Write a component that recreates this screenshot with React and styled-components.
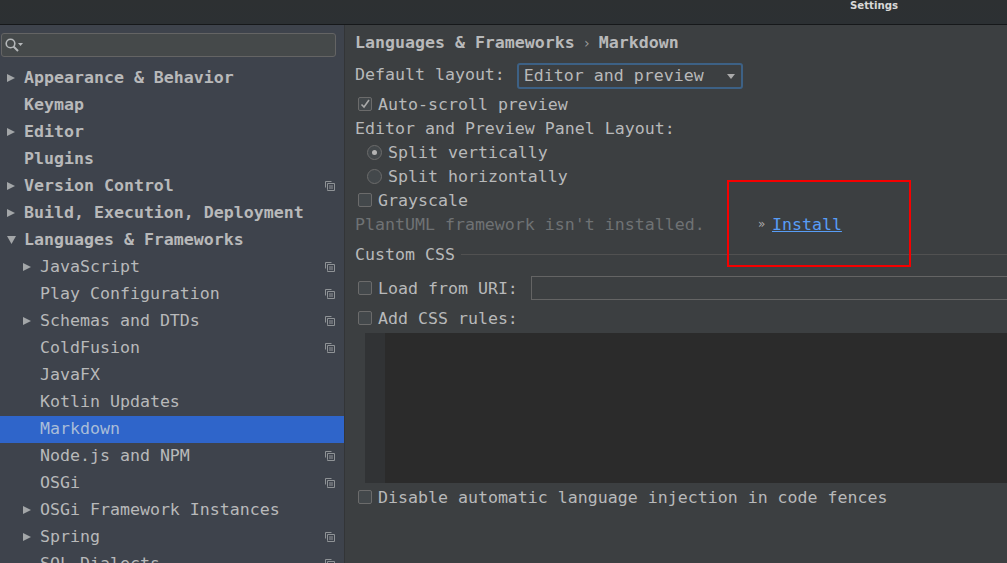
import React from "react";
import styled, { createGlobalStyle } from "styled-components";

const Global = createGlobalStyle`
  html, body { margin: 0; padding: 0; background: #3c3f41; }
  body { font-family: "DejaVu Sans Mono", monospace; font-size: 16.6px; }
`;
const Page = styled.div`
  width: 1007px; height: 563px; position: relative; overflow: hidden;
  display: flex; flex-direction: column; color: #b8b9ba;
`;
const TitleBar = styled.header`
  height: 24px; flex: none; background: linear-gradient(#2d3032, #2c3033);
  border-bottom: 1px solid #16181a; position: relative;
`;
const TitleText = styled.span`
  position: absolute; left: 850px; top: -1px; line-height: 14px;
  font-family: "DejaVu Sans", sans-serif; font-weight: 700; font-size: 10.2px; color: #d8d8d8;
`;
const Body = styled.div`display: flex; flex: 1; min-height: 0;`;
const Sidebar = styled.nav`
  width: 344px; flex: none; background: #3e434c; border-right: 1px solid #333537;
  padding-top: 8px; overflow: hidden;
`;
const SearchBox = styled.div`
  width: 330px; height: 22px; margin-left: 1px; background: #45494a; border: 1px solid #646464;
  border-radius: 3px; display: flex; align-items: center; padding-left: 3px; box-sizing: content-box;
`;
const Tree = styled.ul`list-style: none; margin: 8px 0 0; padding: 0;`;
const Row = styled.li`
  height: 27px; display: flex; align-items: center; position: relative; white-space: pre; box-sizing: border-box;
  padding: 0 9px 2px ${p => (p.$sub ? 40 : 24)}px;
  font-weight: ${p => (p.$sub ? 400 : 700)};
  background: ${p => (p.$sel ? "#2f65ca" : "transparent")};
  color: ${p => (p.$sel ? "#a9bdd8" : "inherit")};
`;
const RowLabel = styled.span`flex: 1;`;
const Arrow = styled.svg`position: absolute; left: ${p => (p.$sub ? 23 : 7)}px; top: 8px;`;

const Main = styled.main`flex: 1; min-width: 0; padding: 5px 0 0 10px; overflow: hidden;`;
const Crumbs = styled.div`height: 25px; display: flex; align-items: center; font-weight: 700; white-space: pre;`;
const CrumbSep = styled.span`font-weight: 400; font-size: 14px; width: 24px; text-align: center; color: #999;`;
const FormRow = styled.div`
  height: ${p => p.$h || 24}px; display: flex; align-items: center; white-space: pre;
  margin-top: ${p => p.$mt || 0}px;
`;
const ComboLabel = styled.span`margin-bottom: 4px;`;
const Combo = styled.div`
  width: 226px; height: 26px; margin-left: 12px; padding: 0 6px 2px 5px; display: flex; align-items: center;
  justify-content: space-between; border: 2px solid #3d6185; border-radius: 3px; background: #3c3f41;
  box-sizing: border-box;
`;
const Caret = styled.span`width: 0; height: 0; margin-top: 2px; border: 4px solid transparent; border-top: 5px solid #aaaaaa; border-bottom: 0;`;
const Check = styled.span`
  width: 12px; height: 12px; border: 1px solid #6b6b6b; border-radius: 2px; background: #43484b;
  margin: 0 6px 0 3px; flex: none; display: flex; align-items: center; justify-content: center;
`;
const Radio = styled.span`
  width: 13px; height: 13px; border: 1px solid #6b6b6b; border-radius: 50%; background: #43484b;
  margin: 0 6px 0 12px; flex: none; display: flex; align-items: center; justify-content: center;
`;
const Dot = styled.span`width: 5px; height: 5px; border-radius: 50%; background: #b4b4b4;`;
const Muted = styled.span`color: #6f7274; width: 403px;`;
const More = styled.span`width: 14px; font-size: 12px; color: #aaa; font-family: "DejaVu Sans", sans-serif;`;
const Link = styled.a`color: #589df6; text-decoration: underline;`;
const SectionTitle = styled.div`display: flex; align-items: center; gap: 6px; height: 24px; margin-top: 6px; white-space: pre;`;
const Rule = styled.span`flex: 1; height: 1px; background: #515151;`;
const UriInput = styled.div`flex: 1; height: 22px; margin-left: 13px; border: 1px solid #646464; border-right: 0; background: #3c3f41;`;
const CodeArea = styled.div`height: 150px; margin: 3px 0 0 10px; background: #2b2b2b; display: flex;`;
const Gutter = styled.div`width: 20px; background: #313335;`;
const Annotation = styled.div`
  position: absolute; left: 727px; top: 180px; width: 180px; height: 83px; border: 2px solid #f60000; pointer-events: none;
`;

const Copy = styled.svg`flex: none;`;
const CopyIcon = () => (
  <Copy width="10" height="10" viewBox="0 0 10 10" fill="none" stroke="#8f9396" strokeWidth="1">
    <path d="M.5 6.5V.5h6" />
    <path d="M2.5 8.5V2.5h7v7h-7zM4 5h4M4 7h4" />
  </Copy>
);
const Tri = ({ sub, open }) => (
  <Arrow $sub={sub} width="9" height="10" viewBox="0 0 9 10" fill="#a3a6a8">
    {open ? <path d="M0 1h9L4.5 9z" /> : <path d="M0 1l8 4-8 4z" />}
  </Arrow>
);

const items = [
  ["Appearance & Behavior", 0, 1], ["Keymap"], ["Editor", 0, 1], ["Plugins"],
  ["Version Control", 0, 1, 1], ["Build, Execution, Deployment", 0, 1],
  ["Languages & Frameworks", 0, 2],
  ["JavaScript", 1, 1, 1], ["Play Configuration", 1, 0, 1], ["Schemas and DTDs", 1, 1, 1],
  ["ColdFusion", 1, 0, 1], ["JavaFX", 1], ["Kotlin Updates", 1], ["Markdown", 1, 0, 0, 1],
  ["Node.js and NPM", 1, 0, 1], ["OSGi", 1, 0, 1], ["OSGi Framework Instances", 1, 1],
  ["Spring", 1, 1, 1], ["SQL Dialects", 1, 0, 1],
];

export default function App() {
  return (
    <Page>
      <Global />
      <TitleBar><TitleText>Settings</TitleText></TitleBar>
      <Body>
        <Sidebar>
          <SearchBox>
            <svg width="20" height="14" viewBox="0 0 20 14" fill="none" stroke="#b5b8ba">
              <circle cx="5.5" cy="5.5" r="4.3" strokeWidth="1.6" />
              <path d="M8.5 8.5l4.5 4.5" strokeWidth="2" />
              <path d="M13 5h5l-2.5 3z" fill="#b5b8ba" stroke="none" />
            </svg>
          </SearchBox>
          <Tree>
            {items.map(([label, sub, arrow, copy, sel]) => (
              <Row key={label} $sub={sub} $sel={sel}>
                {arrow ? <Tri sub={sub} open={arrow === 2} /> : null}
                <RowLabel>{label}</RowLabel>
                {copy ? <CopyIcon /> : null}
              </Row>
            ))}
          </Tree>
        </Sidebar>
        <Main>
          <Crumbs>Languages &amp; Frameworks<CrumbSep>›</CrumbSep>Markdown</Crumbs>
          <FormRow $h={26} $mt={8}><ComboLabel>Default layout:</ComboLabel><Combo>Editor and preview<Caret /></Combo></FormRow>
          <FormRow $mt={3}>
            <Check>
              <svg width="10" height="10" viewBox="0 0 10 10" fill="none" stroke="#aaaaaa" strokeWidth="1.6"><path d="M1.5 5.5l2.5 2.5 5-7" /></svg>
            </Check>Auto-scroll preview
          </FormRow>
          <FormRow>Editor and Preview Panel Layout:</FormRow>
          <FormRow><Radio><Dot /></Radio>Split vertically</FormRow>
          <FormRow><Radio />Split horizontally</FormRow>
          <FormRow><Check />Grayscale</FormRow>
          <FormRow><Muted>PlantUML framework isn't installed.</Muted><More>»</More><Link>Install</Link></FormRow>
          <SectionTitle>Custom CSS<Rule /></SectionTitle>
          <FormRow $mt={10}><Check />Load from URI:<UriInput /></FormRow>
          <FormRow $mt={6}><Check />Add CSS rules:</FormRow>
          <CodeArea><Gutter /></CodeArea>
          <FormRow $mt={2}><Check />Disable automatic language injection in code fences</FormRow>
        </Main>
      </Body>
      <Annotation />
    </Page>
  );
}
